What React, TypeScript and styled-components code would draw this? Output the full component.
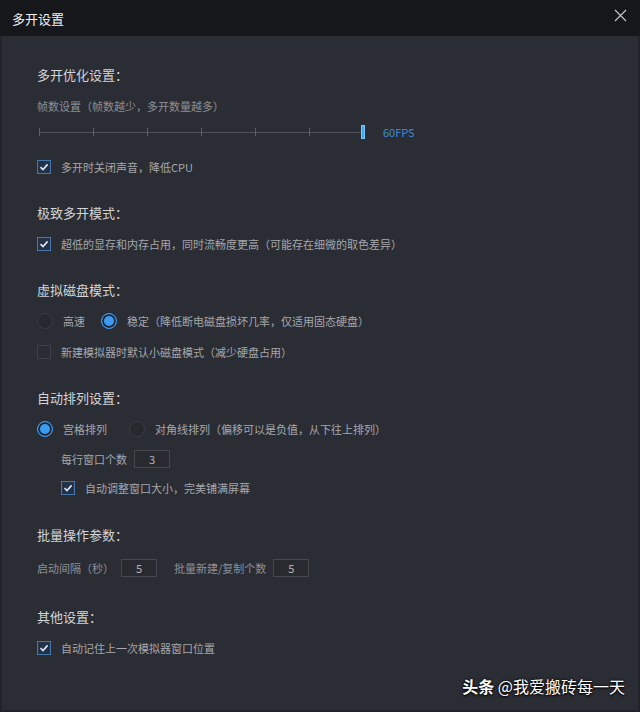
import styled, { createGlobalStyle } from "styled-components";

const Blue = "#3d9cf0";
const Heading = "#d3d4d7";
const Label = "#a5a7ac";
const Hint = "#8d8f95";

const GlobalStyle = createGlobalStyle`
  html, body {
    margin: 0;
    padding: 0;
    background: #2b2d34;
  }
  body {
    font-family: "Noto Sans CJK SC", "Noto Sans", "Liberation Sans", sans-serif;
  }
`;

function Check({ checked }: { checked?: boolean }) {
  return (
    <CheckBox $checked={checked}>
      {checked && (
        <svg width="10" height="10" viewBox="0 0 10 10">
          <path d="M1.5 5.2 L4 7.6 L8.6 2.4" fill="none" stroke="#dbe7f4" strokeWidth="1.6" />
        </svg>
      )}
    </CheckBox>
  );
}

export default function App() {
  return (
    <>
      <GlobalStyle />
      <Window>
        <TitleBar>
          <Title>多开设置</Title>
          <CloseButton>
            <svg width="13" height="13" viewBox="0 0 13 13">
              <path d="M1 1 L12 12 M12 1 L1 12" stroke="#c9cacd" strokeWidth="1.1" />
            </svg>
          </CloseButton>
        </TitleBar>
        <Body>
          <Section>
            <SectionTitle>多开优化设置：</SectionTitle>
            <Row>
              <HintText>帧数设置（帧数越少，多开数量越多）</HintText>
            </Row>
            <SliderRow>
              <Track>
                {[0, 1, 2, 3, 4, 5].map((i) => (
                  <Segment key={i} />
                ))}
                <Thumb />
              </Track>
              <Fps>60FPS</Fps>
            </SliderRow>
            <Row>
              <Check checked />
              <Text>多开时关闭声音，降低CPU</Text>
            </Row>
          </Section>

          <Section>
            <SectionTitle>极致多开模式：</SectionTitle>
            <Row>
              <Check checked />
              <Text>超低的显存和内存占用，同时流畅度更高（可能存在细微的取色差异）</Text>
            </Row>
          </Section>

          <Section>
            <SectionTitle>虚拟磁盘模式：</SectionTitle>
            <Row>
              <Radio />
              <Text>高速</Text>
              <Radio $checked $gap={16} />
              <Text>稳定（降低断电磁盘损坏几率，仅适用固态硬盘）</Text>
            </Row>
            <Row>
              <Check />
              <Text>新建模拟器时默认小磁盘模式（减少硬盘占用）</Text>
            </Row>
          </Section>

          <Section>
            <SectionTitle>自动排列设置：</SectionTitle>
            <Row>
              <Radio $checked />
              <Text>宫格排列</Text>
              <Radio $gap={22} />
              <Text>对角线排列（偏移可以是负值，从下往上排列）</Text>
            </Row>
            <SubRow>
              <Text>每行窗口个数</Text>
              <NumberBox>3</NumberBox>
            </SubRow>
            <SubRow>
              <Check checked />
              <Text>自动调整窗口大小，完美铺满屏幕</Text>
            </SubRow>
          </Section>

          <Section $extra={2}>
            <SectionTitle>批量操作参数：</SectionTitle>
            <InputRow>
              <HintText>启动间隔（秒）</HintText>
              <NumberBox>5</NumberBox>
              <HintText>批量新建/复制个数</HintText>
              <NumberBox>5</NumberBox>
            </InputRow>
          </Section>

          <Section>
            <SectionTitle>其他设置：</SectionTitle>
            <Row>
              <Check checked />
              <Text>自动记住上一次模拟器窗口位置</Text>
            </Row>
          </Section>
        </Body>
        <Watermark>
          <b>头条</b> @我爱搬砖每一天
        </Watermark>
      </Window>
    </>
  );
}

const Window = styled.div`
  position: relative;
  display: flex;
  flex-direction: column;
  min-height: 712px;
  box-sizing: border-box;
`;

const TitleBar = styled.div`
  height: 36px;
  background: #16171b;
  display: flex;
  align-items: center;
  justify-content: space-between;
  padding: 0 13px 0 12px;
  flex-shrink: 0;
`;

const Title = styled.span`
  font-size: 13px;
  color: #f0f0f0;
`;

const CloseButton = styled.span`
  display: flex;
  margin-top: -6px;
`;

const Body = styled.div`
  flex: 1;
  display: flex;
  flex-direction: column;
  gap: 16px;
  background: #2b2d34;
  border: 2px solid #212328;
  border-top: none;
  padding: 24px 35px 0;
`;

const Section = styled.div<{ $extra?: number }>`
  display: flex;
  flex-direction: column;
  margin-top: ${(p) => p.$extra ?? 0}px;
`;

const SectionTitle = styled.div`
  height: 30px;
  line-height: 30px;
  font-size: 13px;
  color: ${Heading};
`;

const Row = styled.div`
  height: 31px;
  display: flex;
  align-items: center;
`;

const SubRow = styled(Row)`
  height: 29px;
  padding-left: 24px;
`;

const InputRow = styled(Row)`
  height: 36px;
`;

const Text = styled.span`
  font-size: 11px;
  line-height: 16px;
  color: ${Label};
  margin-left: 10px;
  white-space: nowrap;
  ${SubRow} > &:first-child {
    margin-left: 0;
  }
`;

const HintText = styled.span`
  font-size: 11px;
  line-height: 16px;
  color: ${Hint};
  white-space: nowrap;
`;

const CheckBox = styled.span<{ $checked?: boolean }>`
  width: 14px;
  height: 14px;
  box-sizing: border-box;
  display: flex;
  align-items: center;
  justify-content: center;
  flex-shrink: 0;
  border: 1px solid ${(p) => (p.$checked ? "#4677ad" : "#3d4047")};
  background: ${(p) => (p.$checked ? "#243248" : "#2a2c32")};
`;

const Radio = styled.span<{ $checked?: boolean; $gap?: number }>`
  width: 16px;
  height: 16px;
  box-sizing: border-box;
  border-radius: 50%;
  flex-shrink: 0;
  margin-left: ${(p) => p.$gap ?? 0}px;
  border: 1px solid ${(p) => (p.$checked ? Blue : "#3a3d44")};
  background: ${(p) => (p.$checked ? Blue : "#26282d")};
  box-shadow: ${(p) => (p.$checked ? "inset 0 0 0 2px #1e2a3a" : "none")};
`;

const NumberBox = styled.span`
  width: 36px;
  height: 18px;
  box-sizing: border-box;
  border: 1px solid #45484f;
  background: #282a30;
  color: #b4b6bb;
  font-size: 11px;
  display: flex;
  align-items: center;
  justify-content: center;
  margin: 0 17px 0 7px;
`;

const SliderRow = styled.div`
  height: 18px;
  display: flex;
  align-items: center;
  padding-left: 2px;
  margin: 2px 0 10px;
`;

const Track = styled.div`
  display: flex;
  align-items: center;
`;

const Segment = styled.span`
  width: 54px;
  height: 8px;
  box-sizing: border-box;
  border-left: 1px solid #5d6067;
  background: linear-gradient(#50535a, #50535a) center / 100% 1px no-repeat;
`;

const Thumb = styled.span`
  width: 4px;
  height: 14px;
  margin-left: -2px;
  background: #45aaf2;
  border: 1px solid #7cc4f7;
  box-sizing: border-box;
`;

const Fps = styled.span`
  margin-left: 18px;
  font-size: 11px;
  color: #3c8fda;
`;

const Watermark = styled.div`
  position: absolute;
  right: 15px;
  bottom: 14px;
  font-size: 16px;
  color: #ffffff;
  text-shadow: 0 0 3px #000, 0 1px 2px #000;
  b {
    font-weight: 700;
  }
`;
